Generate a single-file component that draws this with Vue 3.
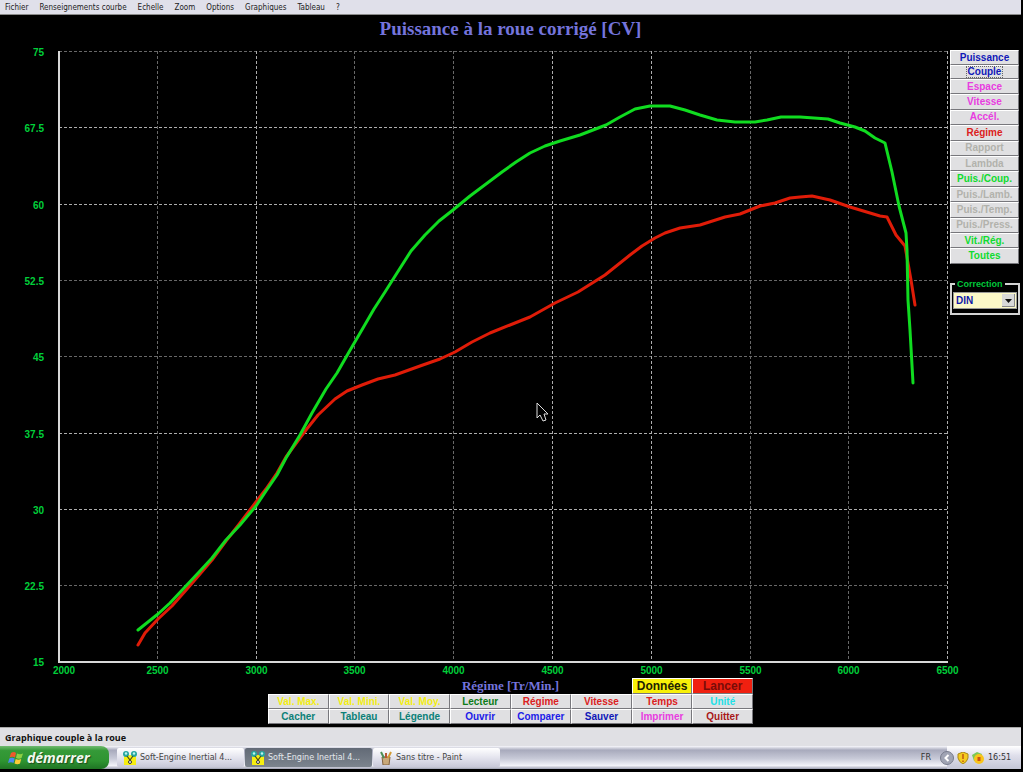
<template>
  <div class="screen">
    <nav class="menu-bar">
      <button v-for="item in menus" :key="item" type="button" class="menu-item">{{ item }}</button>
    </nav>

    <main class="workspace">
      <h1 class="chart-title">Puissance à la roue corrigé [CV]</h1>

      <svg class="chart" viewBox="0 42 948 636" role="img" aria-label="Puissance à la roue corrigé">
        <g class="grid">
          <line
            v-for="t in yTicks"
            :key="'h' + t.label"
            x1="59"
            :y1="t.pos"
            x2="948"
            :y2="t.pos"
            :class="{ bright: t.bright }"
          />
          <line
            v-for="t in xTicks"
            :key="'v' + t.label"
            :x1="t.pos"
            y1="51"
            :x2="t.pos"
            y2="662"
            :class="{ bright: t.bright }"
          />
        </g>
        <path class="axis" d="M59 51V662H948" />
        <g class="tick-labels">
          <text v-for="t in yTicks" :key="'y' + t.label" x="44" :y="t.pos + 4" text-anchor="end">{{ t.label }}</text>
          <text v-for="t in xTicks" :key="'x' + t.label" :x="t.labelPos" y="674" text-anchor="middle">{{ t.label }}</text>
        </g>
        <polyline class="curve torque" :points="torque" />
        <polyline class="curve power" :points="power" />
        <path class="cursor" d="M537 403v15l3-3 3 6 3-1-2-6h4z" />
      </svg>

      <aside class="side">
        <div class="side-buttons">
          <button
            v-for="b in sideButtons"
            :key="b.label"
            type="button"
            class="btn"
            :class="[b.color, { focused: b.label === 'Couple' }]"
            :disabled="b.color === 'off'"
          ><span>{{ b.label }}</span></button>
        </div>

        <fieldset class="correction">
          <legend><label for="correction">Correction</label></legend>
          <div class="select-box">
            <select id="correction" v-model="correction">
              <option>DIN</option>
            </select>
            <svg class="select-arrow" viewBox="0 0 13 13" aria-hidden="true">
              <rect width="13" height="13" fill="#d8d8d8" />
              <path d="M12.500 0V12.500H0" fill="none" stroke="#888" />
              <path d="M3 5h7L6.500 9z" fill="#111" />
            </svg>
          </div>
        </fieldset>
      </aside>
    </main>

    <section class="controls">
      <h2 class="axis-title">Régime [Tr/Min.]</h2>
      <button type="button" class="btn big data">Données</button>
      <button type="button" class="btn big launch">Lancer</button>
      <button v-for="b in bottomButtons" :key="b.label" type="button" class="btn" :class="b.color">{{ b.label }}</button>
    </section>

    <footer class="bottom">
      <div class="status-bar">Graphique couple à la roue</div>
      <div class="taskbar">
        <button type="button" class="start">
          <svg class="flag" viewBox="0 0 16 14" aria-hidden="true">
            <path d="M3 2Q6 0 8 2L7 6.500Q4 5 1.500 6.500z" fill="#f0582c" />
            <path d="M9 2.500Q12 4 15 2.500L13.500 7Q11 8.500 8 7z" fill="#8fd044" />
            <path d="M1.300 7.500Q4 6 6.700 7.500L5.500 12Q3 10.500 0 12z" fill="#4a8af0" />
            <path d="M7.700 8Q10.500 9.500 13.200 8L12 12.500Q9.500 14 6.500 12.500z" fill="#fccc35" />
          </svg>
          démarrer
        </button>
        <button
          v-for="(task, i) in tasks"
          :key="i"
          type="button"
          class="task"
          :class="{ active: task.active }"
        >
          <svg v-if="task.icon === 'engine'" class="task-icon" viewBox="0 0 14 14" aria-hidden="true">
            <path d="M1 4h12v10H1z" fill="#f7ee10" />
            <circle cx="3" cy="3" r="3" fill="#27a6a0" />
            <circle cx="11" cy="3" r="3" fill="#27a6a0" />
            <circle cx="3" cy="2.500" r="1.200" fill="#bdf5f0" />
            <circle cx="11" cy="2.500" r="1.200" fill="#bdf5f0" />
            <path d="M4 5l3 4 3-4M7 8v2" fill="none" stroke="#4c4a18" stroke-width="1.200" />
            <circle cx="7" cy="11" r="1.500" fill="#fff" stroke="#333" />
          </svg>
          <svg v-else class="task-icon" viewBox="0 0 14 14" aria-hidden="true">
            <path d="M3 6h8l-1 8H4z" fill="#c9a878" stroke="#806040" />
            <path d="M5 7L2 1" stroke="#4c8e55" stroke-width="2" />
            <path d="M7 7V2" stroke="#b75535" stroke-width="2" />
            <path d="M9 7l3-6" stroke="#d39b32" stroke-width="2" />
          </svg>
          <span>{{ task.label }}</span>
        </button>
        <span class="lang">FR</span>
        <div class="tray">
          <button type="button" class="tray-toggle" aria-label="Afficher les icônes cachées">
            <svg viewBox="0 0 14 14" aria-hidden="true">
              <circle cx="7" cy="7" r="6.500" fill="#a0a4b4" stroke="#777b8c" />
              <path d="M8.500 4L5.500 7l3 3" fill="none" stroke="#fff" stroke-width="2" />
            </svg>
          </button>
          <svg class="tray-icon" viewBox="0 0 12 12" aria-hidden="true">
            <path d="M6 0l5 2v4q-1 4-5 6-4-2-5-6V2z" fill="#f5cb20" stroke="#a88718" />
            <path d="M6 2v5M6 8.500v1.500" stroke="#c05a10" stroke-width="1.500" />
          </svg>
          <svg class="tray-icon" viewBox="0 0 12 12" aria-hidden="true">
            <path d="M0 3l5-3 5 2-3 8-5-1z" fill="#7dc855" />
            <circle cx="7" cy="7" r="5" fill="#f8c41c" />
            <path d="M5.500 5h3v4h-3z" fill="#cb5212" />
          </svg>
          <time class="clock">16:51</time>
        </div>
      </div>
    </footer>
  </div>
</template>

<script setup>
import { ref } from 'vue'

const correction = ref('DIN')

const menus = ['Fichier', 'Renseignements courbe', 'Echelle', 'Zoom', 'Options', 'Graphiques', 'Tableau', '?']

const sideButtons = [
  { label: 'Puissance', color: 'navy' },
  { label: 'Couple', color: 'navy' },
  { label: 'Espace', color: 'pink' },
  { label: 'Vitesse', color: 'pink' },
  { label: 'Accél.', color: 'pink' },
  { label: 'Régime', color: 'red' },
  { label: 'Rapport', color: 'off' },
  { label: 'Lambda', color: 'off' },
  { label: 'Puis./Coup.', color: 'green' },
  { label: 'Puis./Lamb.', color: 'off' },
  { label: 'Puis./Temp.', color: 'off' },
  { label: 'Puis./Press.', color: 'off' },
  { label: 'Vit./Rég.', color: 'green' },
  { label: 'Toutes', color: 'green' }
]

const bottomButtons = [
  { label: 'Val. Max.', color: 'yellow' },
  { label: 'Val. Mini.', color: 'yellow' },
  { label: 'Val. Moy.', color: 'yellow' },
  { label: 'Lecteur', color: 'forest' },
  { label: 'Régime', color: 'red' },
  { label: 'Vitesse', color: 'red' },
  { label: 'Temps', color: 'red' },
  { label: 'Unité', color: 'cyan' },
  { label: 'Cacher', color: 'teal' },
  { label: 'Tableau', color: 'teal' },
  { label: 'Légende', color: 'teal' },
  { label: 'Ouvrir', color: 'blue' },
  { label: 'Comparer', color: 'blue' },
  { label: 'Sauver', color: 'navy' },
  { label: 'Imprimer', color: 'pink' },
  { label: 'Quitter', color: 'maroon' }
]

const tasks = [
  { label: 'Soft-Engine Inertial 4...', icon: 'engine', active: false },
  { label: 'Soft-Engine Inertial 4...', icon: 'engine', active: true },
  { label: 'Sans titre - Paint', icon: 'paint', active: false }
]

const brightY = [67.5, 60, 37.5, 30]
const yTicks = [75, 67.5, 60, 52.5, 45, 37.5, 30, 22.5, 15].map((label, i) => ({
  label,
  pos: Math.round(51 + i * 76.3) + 0.5,
  bright: brightY.includes(label)
}))

const brightX = [3000, 4500, 5000, 6500]
const xTicks = [2000, 2500, 3000, 3500, 4000, 4500, 5000, 5500, 6000, 6500].map((label, i) => {
  const pos = Math.round(58 + i * 98.8) + 0.5
  return { label, pos, labelPos: i === 0 ? 64 : pos, bright: brightX.includes(label) }
})

const power =
  '138,630 148,622 158,614 170,603 185,587 200,571 212,558 226,540 240,525 256,506 266,491 277,475 ' +
  '286,458 300,435 312,413 326,389 337,373 349,352 363,328 374,309 385,292 397,273 411,251 425,235 ' +
  '439,221 453,210 470,196 486,184 502,172 516,162 530,153 545,146 560,141 580,135 606,125 620,117 ' +
  '635,109 650,106 670,106 685,110 700,115 717,120 735,122 755,122 767,120 781,117 800,117 828,119 ' +
  '840,123 855,127 865,131 875,138 885,143 892,172 899,206 906,233 907,250 908,300 910,330 913,383'

const torque =
  '138,645 145,633 158,619 172,606 187,589 200,574 212,560 226,541 240,523 256,502 266,489 277,473 ' +
  '286,457 300,438 306,430 318,415 335,399 347,391 362,385 378,379 395,375 420,366 440,359 455,352 ' +
  '472,342 490,333 510,325 530,317 555,303 578,292 605,275 630,255 642,246 655,238 665,233 680,228 ' +
  '700,225 725,217 740,214 760,206 775,203 790,198 800,197 812,196 830,200 850,207 870,213 880,216 ' +
  '887,217 896,235 905,246 911,280 915,305'
</script>

<style>
body {
  margin: 0;
  background: #000;
}
</style>

<style scoped>
.screen {
  display: flex;
  flex-direction: column;
  min-height: 100vh;
  box-sizing: border-box;
  padding: 0 2px 3px 0;
  background: #000;
  font-family: "Liberation Sans", Arial, sans-serif;
}

button {
  margin: 0;
  padding: 0;
  border: none;
  background: none;
  font-family: inherit;
}

.menu-bar {
  display: flex;
  gap: 11px;
  height: 14px;
  padding: 0 5px;
  background: #e0e0ea;
  border-bottom: 1px solid #8a8a8a;
}

.menu-item {
  font-family: "DejaVu Sans Condensed", "DejaVu Sans", sans-serif;
  font-size: 8px;
  line-height: 13px;
  color: #222;
}

.workspace {
  display: grid;
  grid-template-columns: 1fr 73px;
}

.chart-title {
  grid-column: 1 / -1;
  margin: 0;
  height: 27px;
  font: bold 19px/27px "Liberation Serif", "Times New Roman", serif;
  color: #7474dc;
  text-align: center;
}

.chart {
  display: block;
  width: 100%;
  overflow: visible;
}

.grid line {
  stroke: #686868;
  stroke-width: 1;
  stroke-dasharray: 3 2;
}

.grid line.bright {
  stroke: #adadad;
}

.axis {
  fill: none;
  stroke: #d8d8d8;
  stroke-width: 2;
}

.tick-labels text {
  font-size: 10px;
  font-weight: bold;
  fill: #00cf3a;
}

.curve {
  fill: none;
  stroke-width: 3;
  stroke-linejoin: round;
  stroke-linecap: round;
}

.power {
  stroke: #10dc20;
}

.torque {
  stroke: #e01c08;
}

.cursor {
  fill: #000;
  stroke: #ddd;
  stroke-width: 1;
}

.side {
  padding: 8px 2px 0;
}

.side-buttons {
  display: flex;
  flex-direction: column;
  min-height: 214px;
}

.side-buttons .btn {
  flex: 1;
}

.btn {
  display: flex;
  align-items: center;
  justify-content: center;
  min-width: 0;
  background: #e0e0e2;
  border: 1px solid;
  border-color: #fff #77777c #77777c #fff;
  font-size: 10px;
  font-weight: bold;
  line-height: 12px;
  white-space: nowrap;
}

.navy { color: #1018b8; }
.blue { color: #1c1ce8; }
.pink { color: #e83ce0; }
.red { color: #dc2020; }
.maroon { color: #a81818; }
.green { color: #10dc30; }
.forest { color: #0c7c18; }
.teal { color: #0c8078; }
.cyan { color: #20e0e8; }
.yellow { color: #f4ee10; }
.off { color: #b2b2ac; }

.focused span {
  padding: 0 1px;
  outline: 1px dotted #666;
  line-height: 10px;
}

.correction {
  min-width: 0;
  margin: 14px -1px 0 0;
  padding: 2px 1px 4px;
  border: 2px solid #d4d4d4;
}

.correction legend {
  margin-left: 2px;
  padding: 0 2px;
  font-size: 9px;
  font-weight: bold;
  line-height: 12px;
  color: #00c83a;
}

.select-box {
  position: relative;
}

.select-box select {
  display: block;
  width: 100%;
  height: 17px;
  padding: 0 2px;
  appearance: none;
  background: #fbf8c8;
  border: 1px solid #999;
  border-radius: 0;
  font: bold 10px/15px "Liberation Sans", Arial, sans-serif;
  color: #1018a8;
}

.select-arrow {
  position: absolute;
  top: 2px;
  right: 2px;
  width: 13px;
  height: 13px;
  pointer-events: none;
}

.controls {
  display: grid;
  grid-template-columns: repeat(8, 1fr);
  grid-template-rows: 16px 15px 15px;
  width: 485px;
  max-width: 100%;
  margin: 0 auto 3px;
}

.axis-title {
  grid-area: 1 / 1 / 2 / 9;
  margin: 0;
  font: bold 13px/15px "Liberation Serif", "Times New Roman", serif;
  color: #7474dc;
  text-align: center;
}

.big {
  font-size: 12px;
}

.data {
  grid-area: 1 / 7;
  background: #f8f008;
  color: #222200;
}

.launch {
  grid-area: 1 / 8;
  background: #f02010;
  color: #780c08;
}

.bottom {
  margin-top: auto;
}

.status-bar {
  height: 18px;
  padding-left: 5px;
  background: #e0e0e4;
  border-top: 1px solid #aaa;
  font-family: "Open Sans", "Noto Sans", sans-serif;
  font-size: 9px;
  font-weight: bold;
  line-height: 19px;
  color: #111;
}

.taskbar {
  display: flex;
  align-items: stretch;
  height: 23px;
  background: linear-gradient(#f8f8fc, #a8aabc 18%, #c8cad8 55%, #f2f2f8 85%, #9c9eb0);
  font-family: "DejaVu Sans", sans-serif;
  font-size: 8px;
}

.start {
  display: flex;
  align-items: center;
  gap: 3px;
  width: 109px;
  margin-right: 8px;
  padding-left: 8px;
  background: linear-gradient(#71bb71, #359a38 20%, #2e9431 65%, #1f7424);
  border-radius: 0 8px 8px 0;
  font-family: "Open Sans", "Noto Sans", sans-serif;
  font-size: 14px;
  font-style: italic;
  font-weight: bold;
  line-height: 20px;
  color: #f2f8ee;
  text-shadow: 1px 1px 1px #1c4c1c;
}

.flag {
  width: 16px;
  height: 14px;
}

.task {
  display: flex;
  flex: 0 1 127px;
  align-items: center;
  gap: 3px;
  min-width: 0;
  box-sizing: border-box;
  margin: 2px 1px 2px 0;
  padding: 0 6px;
  background: linear-gradient(#fff, #e4e4ee 50%, #c8c8d8);
  border-radius: 2px;
  font-size: 8px;
  color: #444;
  white-space: nowrap;
}

.task.active {
  background: linear-gradient(#626a76, #7c848e);
  color: #e4e8ec;
}

.task-icon {
  flex: none;
  width: 14px;
  height: 14px;
}

.lang {
  margin-left: auto;
  padding-right: 16px;
  line-height: 23px;
  color: #333;
}

.tray {
  display: flex;
  align-items: center;
  gap: 3px;
  box-sizing: border-box;
  width: 74px;
  background: linear-gradient(#fff, #e0e0ec 40%, #c4c6d6);
}

.tray-toggle {
  flex: none;
  width: 14px;
  height: 14px;
  margin-left: -7px;
}

.tray-toggle svg {
  display: block;
}

.tray-icon {
  flex: none;
  width: 12px;
  height: 12px;
}

.clock {
  margin-left: 1px;
  color: #333;
}
</style>
